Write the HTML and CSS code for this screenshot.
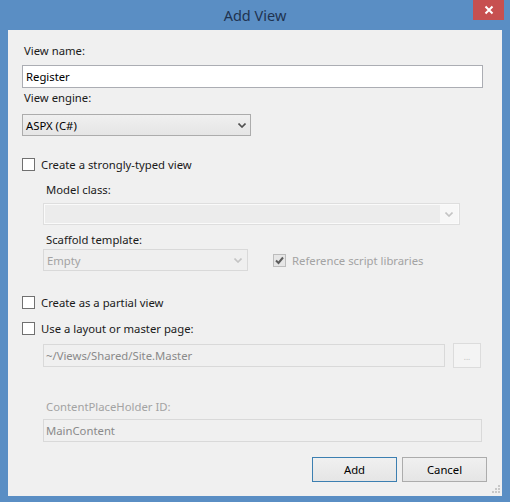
FILE: index.html
```html
<!DOCTYPE html>
<html>
<head>
<meta charset="utf-8">
<link rel="stylesheet" href="styles.css">
</head>
<body>
<div class="window">
  <div class="titlebar">
    <span class="title">Add View</span>
    <span class="close"><svg width="10" height="10" viewBox="0 0 10 10"><path d="M1.5 1.5 L8.5 8.5 M8.5 1.5 L1.5 8.5" stroke="#fff" stroke-width="2" fill="none"/></svg></span>
  </div>
  <div class="client">
    <div class="label first">View name:</div>
    <div class="textbox tb-name">Register</div>
    <div class="label engine-label">View engine:</div>
    <div class="select sel-engine"><span>ASPX (C#)</span><svg class="chev" width="8" height="5" viewBox="0 0 8 5"><path d="M0.5 0.5 L4 4 L7.5 0.5" stroke="#505050" stroke-width="1.6" fill="none"/></svg></div>
    <div class="check row-strong"><span class="box"></span><span>Create a strongly-typed view</span></div>
    <div class="indent">
      <div class="label ilabel model-label">Model class:</div>
      <div class="combo"><span class="combo-text"></span><span class="combo-btn"><svg width="8" height="5" viewBox="0 0 8 5"><path d="M0.5 0.5 L4 4 L7.5 0.5" stroke="#c4c4c4" stroke-width="1.6" fill="none"/></svg></span></div>
      <div class="label ilabel scaffold-label">Scaffold template:</div>
      <div class="row scaffold-row">
        <div class="select disabled sel-empty"><span>Empty</span><svg class="chev" width="8" height="5" viewBox="0 0 8 5"><path d="M0.5 0.5 L4 4 L7.5 0.5" stroke="#c4c4c4" stroke-width="1.6" fill="none"/></svg></div>
        <div class="check disabled ref-check"><span class="box checked"><svg width="11" height="11" viewBox="0 0 11 11"><path d="M2 5.5 L4.5 8 L9 2.5" stroke="#5c5c5c" stroke-width="2" fill="none"/></svg></span><span>Reference script libraries</span></div>
      </div>
    </div>
    <div class="check row-partial"><span class="box"></span><span>Create as a partial view</span></div>
    <div class="check row-layout"><span class="box"></span><span>Use a layout or master page:</span></div>
    <div class="indent">
      <div class="row master-row">
        <div class="textbox disabled tb-master">~/Views/Shared/Site.Master</div>
        <div class="browse">...</div>
      </div>
      <div class="label ilabel disabled cph-label">ContentPlaceHolder ID:</div>
      <div class="textbox disabled tb-cph">MainContent</div>
    </div>
    <div class="buttons">
      <div class="btn default">Add</div>
      <div class="btn">Cancel</div>
    </div>
    <svg class="grip" width="8" height="8" viewBox="0 0 8 8">
      <rect x="6" y="0" width="2" height="2" fill="#c8c8c8"/>
      <rect x="3" y="3" width="2" height="2" fill="#c8c8c8"/>
      <rect x="6" y="3" width="2" height="2" fill="#c8c8c8"/>
      <rect x="0" y="6" width="2" height="2" fill="#c8c8c8"/>
      <rect x="3" y="6" width="2" height="2" fill="#c8c8c8"/>
      <rect x="6" y="6" width="2" height="2" fill="#c8c8c8"/>
    </svg>
  </div>
</div>
</body>
</html>
```

FILE: styles.css
```css
* { box-sizing: border-box; }
html, body { margin: 0; padding: 0; }
body {
  width: 510px;
  height: 502px;
  background: #5a8ec4;
  font-family: "Noto Sans", "Open Sans", sans-serif;
  font-size: 11.3px;
  color: #1a1a1a;
  overflow: hidden;
}
.window {
  width: 510px;
  height: 502px;
  display: flex;
  flex-direction: column;
}
.titlebar {
  position: relative;
  height: 30px;
  display: flex;
  align-items: center;
  justify-content: center;
}
.title {
  font-size: 14.5px;
  color: #1f3350;
}
.close {
  position: absolute;
  top: 0;
  left: 473px;
  width: 31px;
  height: 20px;
  background: #c75050;
  display: flex;
  align-items: center;
  justify-content: center;
}
.client {
  position: relative;
  margin: 0 8px 6px 8px;
  height: 466px;
  background: #f0f0f0;
  padding: 13px 0 0 14px;
}
.label {
  height: 16px;
  line-height: 16px;
  white-space: nowrap;
  padding-left: 2px;
}
.ilabel { padding-left: 3px; }
.label.disabled { color: #a3a3a3; }
.textbox {
  height: 23px;
  border: 1px solid #abadb3;
  background: #fff;
  line-height: 21px;
  padding-left: 3px;
  white-space: nowrap;
}
.textbox.disabled {
  border-color: #d9d9d9;
  background: #f0f0f0;
  color: #8a8a8a;
}
.tb-name { width: 461px; margin-top: 6px; color: #000; }
.engine-label { margin-top: 2px; }
.select {
  height: 22px;
  border: 1px solid #acacac;
  background: linear-gradient(#f0f0f0, #e5e5e5);
  display: flex;
  align-items: center;
  justify-content: space-between;
  padding: 0 4px 0 3px;
  color: #000;
}
.select.disabled {
  border-color: #d9d9d9;
  background: #efefef;
  color: #a3a3a3;
}
.sel-engine { width: 229px; margin-top: 8px; }
.sel-empty { width: 205px; padding-left: 3px; padding-right: 5px; }
.check {
  display: flex;
  align-items: center;
  height: 16px;
  white-space: nowrap;
}
.check .box {
  width: 13px;
  height: 13px;
  border: 1px solid #707070;
  background: #fff;
  margin-right: 6px;
  flex: none;
  display: flex;
  align-items: center;
  justify-content: center;
}
.check.disabled { color: #a3a3a3; }
.check .box.checked {
  border-color: #bcbcbc;
  background: #e6e6e6;
}
.row-strong { margin-top: 20px; }
.indent { margin-left: 21px; }
.model-label { margin-top: 10px; }
.combo {
  width: 417px;
  height: 22px;
  margin-top: 5px;
  border: 1px solid #dedede;
  background: #fafafa;
  display: flex;
  padding: 1px;
}
.combo-text { flex: 1; background: #ececec; }
.combo-btn {
  width: 18px;
  display: flex;
  align-items: center;
  justify-content: center;
  background: #f7f7f7;
}
.scaffold-label { margin-top: 7px; }
.row { display: flex; align-items: center; }
.scaffold-row { margin-top: 1px; height: 22px; }
.ref-check { margin-left: 25px; }
.row-partial { margin-top: 23px; }
.row-layout { margin-top: 10px; }
.master-row { margin-top: 7px; height: 25px; }
.tb-master { width: 402px; padding-left: 2px; }
.browse {
  width: 28px;
  height: 25px;
  margin-left: 8px;
  border: 1px solid #dcdcdc;
  background: #f4f4f4;
  color: #c0c0c0;
  font-size: 8px;
  display: flex;
  align-items: center;
  justify-content: center;
  padding-top: 2px;
}
.cph-label { margin-top: 31px; }
.tb-cph { width: 439px; margin-top: 4px; color: #6e6e6e; padding-left: 2px; }
.buttons {
  display: flex;
  justify-content: flex-end;
  gap: 5px;
  margin-top: 15px;
  padding-right: 15px;
}
.btn {
  width: 85px;
  height: 25px;
  border: 1px solid #acacac;
  background: linear-gradient(#f0f0f0, #e5e5e5);
  display: flex;
  align-items: center;
  justify-content: center;
  color: #000;
}
.btn.default { border-color: #3c7fb1; }
.grip {
  position: absolute;
  right: 2px;
  bottom: 3px;
}
```
